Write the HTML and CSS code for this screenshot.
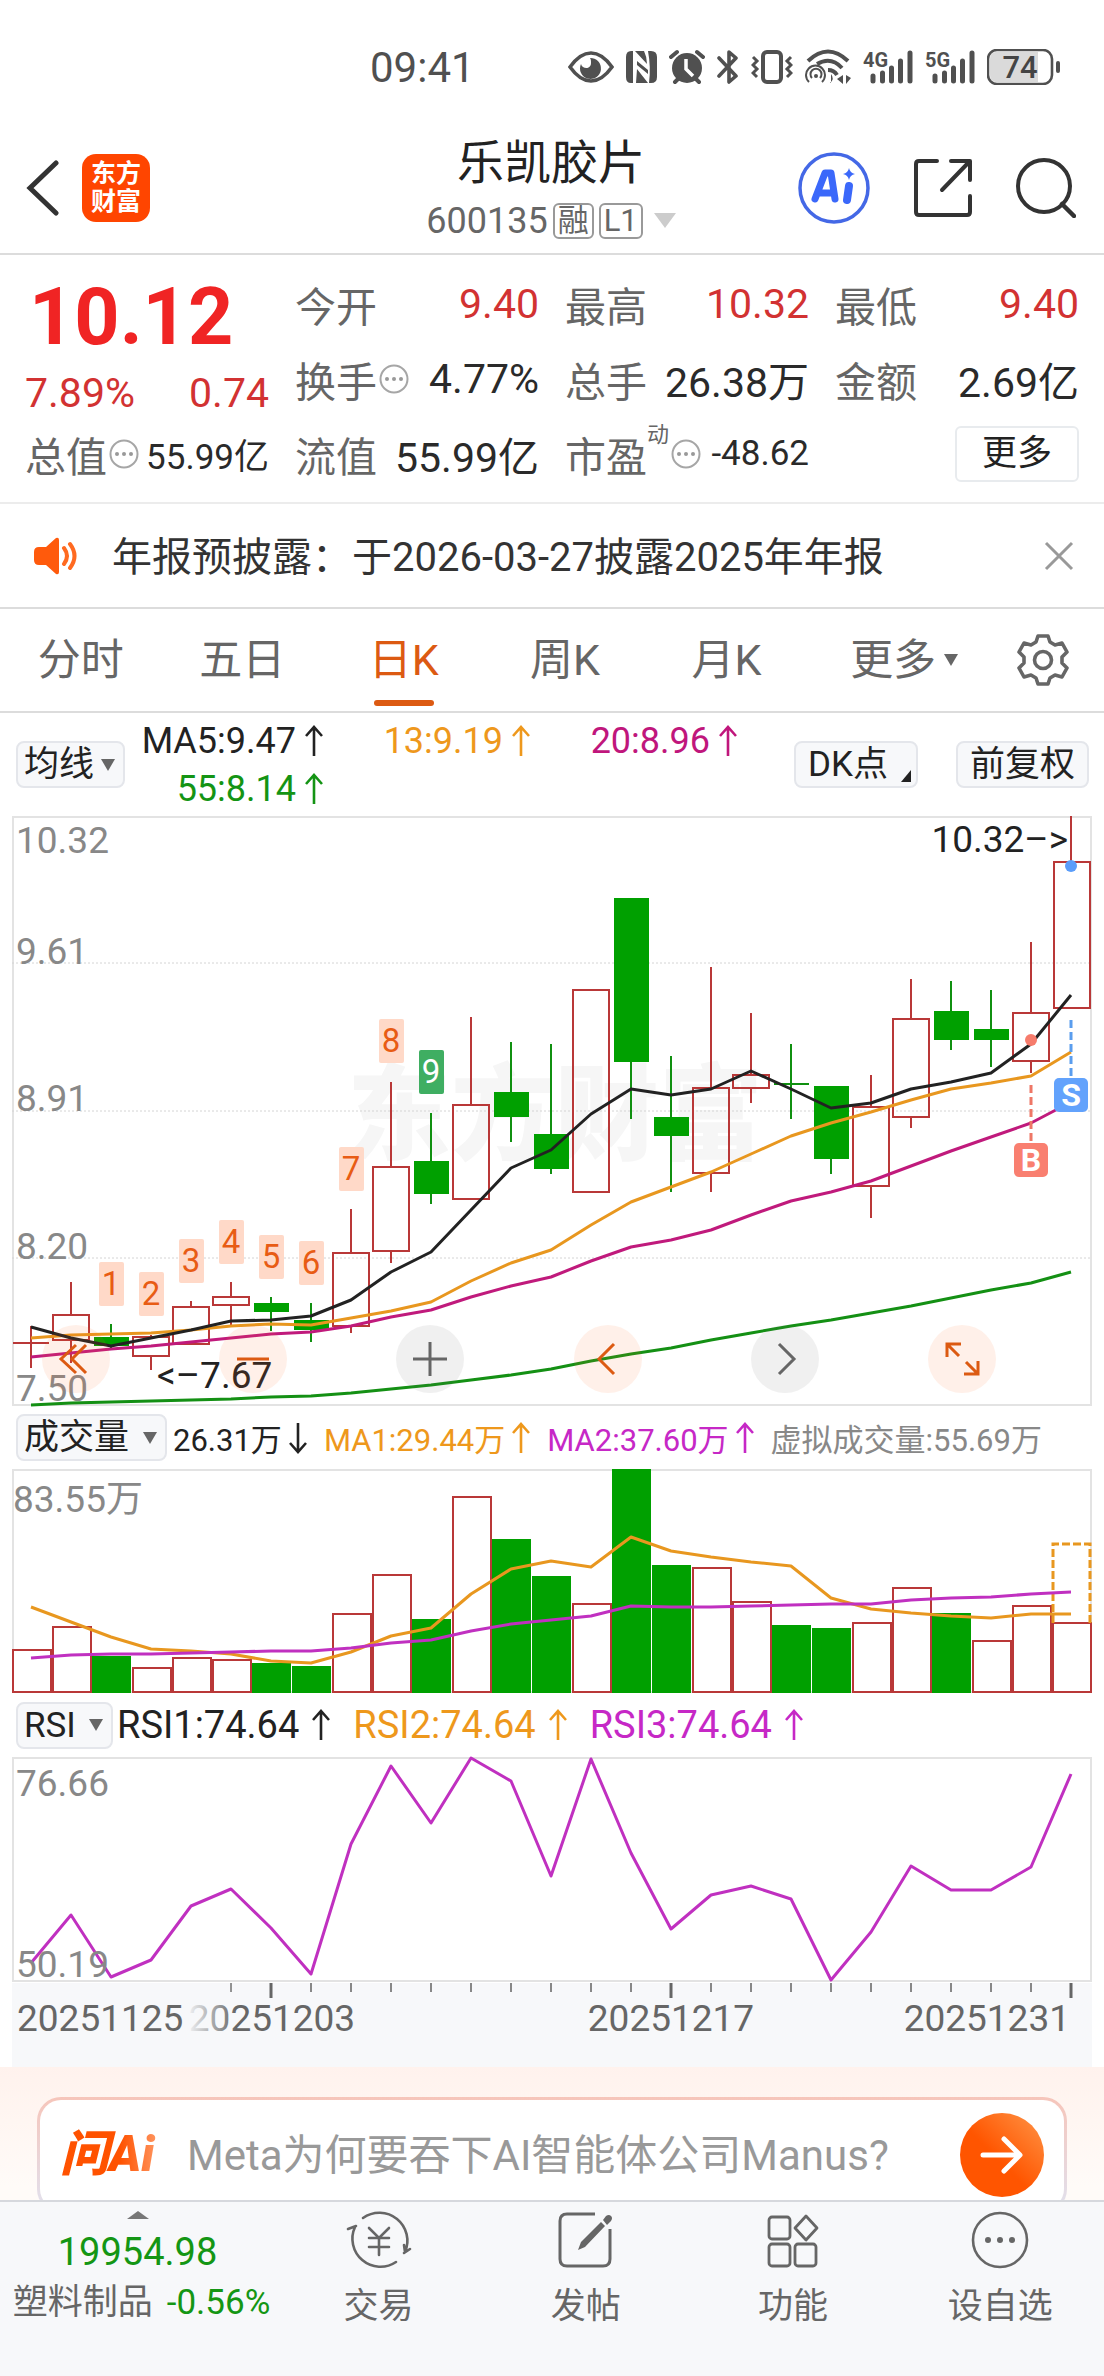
FILE: index.html
```html
<!DOCTYPE html>
<html lang="zh-CN">
<head>
    <meta charset="UTF-8">
    <meta name="viewport" content="width=device-width, initial-scale=1.0">
    <title>乐凯胶片 600135</title>
    <link rel="stylesheet" href="styles.css">
</head>
<body>
    <svg class="defs" width="0" height="0" aria-hidden="true">
        <symbol id="up" viewBox="0 0 20 32"><path d="M10 31V2M2 11l8-9 8 9" fill="none" stroke="currentColor" stroke-width="2.6"/></symbol>
        <symbol id="down" viewBox="0 0 20 32"><path d="M10 1v29M2 21l8 9 8-9" fill="none" stroke="currentColor" stroke-width="2.6"/></symbol>
        <symbol id="caret" viewBox="0 0 14 12"><path d="M0 0h14L7 12z" fill="currentColor"/></symbol>
        <symbol id="info" viewBox="0 0 30 30"><circle cx="15" cy="15" r="13.5" fill="none" stroke="#a6a6a6" stroke-width="2"/><g fill="#999"><circle cx="8" cy="15" r="2"/><circle cx="15" cy="15" r="2"/><circle cx="22" cy="15" r="2"/></g></symbol>
    </svg>

    <div class="status-bar">
        <span class="time">09:41</span>
        <div class="status-icons">
            <svg width="46" height="36" viewBox="0 0 46 36"><path d="M2 18Q12 4 23 4t21 14Q34 32 23 32T2 18z" fill="none" stroke="#505050" stroke-width="3.6"/><path d="M22 9a10.500 10.500 0 1 1-9 6c1 5 10 6 10-1 0-2 0-4-1-5z" fill="#505050"/></svg>
            <svg width="31" height="36" viewBox="0 0 31 36"><path d="M5 2h2v32H5q-5 0-5-6V8q0-6 5-6zM25 2q6 0 6 6v20q0 6-6 6h-2q2-16-1-32z" fill="#505050"/><path d="M9 2h9q3 6 3 13zM11 12l11 9v4L11 16zM11 20l11 14H10z" fill="#505050"/></svg>
            <svg width="36" height="36" viewBox="0 0 36 36"><circle cx="18" cy="19" r="15" fill="#505050"/><path d="M2 8l6-5M34 8l-6-5M6 33l5-5M30 33l-5-5" stroke="#505050" stroke-width="4" stroke-linecap="round"/><path d="M17 10v10l7 7" fill="none" stroke="#fff" stroke-width="3.500"/></svg>
            <svg width="22" height="36" viewBox="0 0 22 36"><path d="M2 9l17 18-7 6V3l7 6L2 27" fill="none" stroke="#505050" stroke-width="3.600" stroke-linejoin="round" stroke-linecap="round"/></svg>
            <svg width="42" height="36" viewBox="0 0 42 36"><rect x="12" y="3" width="18" height="30" rx="4" fill="none" stroke="#505050" stroke-width="4"/><path d="M2 8l4 4-4 4 4 4-4 4 4 4M40 8l-4 4 4 4-4 4 4 4-4 4" fill="none" stroke="#505050" stroke-width="3"/></svg>
            <svg width="46" height="36" viewBox="0 0 46 36"><g fill="none" stroke="#505050"><path d="M3 12Q23-7 43 12" stroke-width="4"/><path d="M12 15q14-8 25 4M23 21q6 0 9 5" stroke-width="4"/><path d="M4 33a9.500 9.500 0 1 1 13 0M7 29a5.500 5.500 0 1 1 8 0" stroke-width="2"/></g><circle cx="11" cy="27" r="2" fill="#505050"/><path d="M25 34q5-4 1-9v9M38 26v9l-6-5zM41 26v9l5-6z" fill="#505050"/></svg>
            <svg class="signal" width="50" height="36" viewBox="0 0 50 36"><text x="0" y="18" class="net">4G</text><path d="M10 27v5M19.500 24v8M28.500 19v13M37.500 12v20M47 4v28" stroke="#505050" stroke-width="5" stroke-linecap="round"/></svg>
            <svg class="signal" width="50" height="36" viewBox="0 0 50 36"><text x="0" y="18" class="net">5G</text><path d="M10 27v5M19.500 24v8M28.500 19v13M37.500 12v20M47 4v28" stroke="#505050" stroke-width="5" stroke-linecap="round"/></svg>
            <svg width="73" height="36" viewBox="0 0 73 36"><path d="M9 3h42v30H9q-6 0-6-7V10q0-7 6-7z" fill="#dadada"/><rect x="1" y="1" width="64" height="34" rx="9" fill="none" stroke="#505050" stroke-width="2.600"/><rect x="69" y="12" width="4" height="12" rx="2" fill="#505050"/><text x="33" y="29" text-anchor="middle" class="battery">74</text></svg>
        </div>
    </div>

    <header class="header">
        <div class="header-left">
            <button class="icon-btn" aria-label="返回"><svg width="34" height="56" viewBox="0 0 34 56"><path d="M30 3L4 28l26 25" fill="none" stroke="#333" stroke-width="5" stroke-linecap="round"/></svg></button>
            <a class="logo" href="#"><span>东方</span><span>财富</span></a>
        </div>
        <div class="header-title">
            <h1>乐凯胶片</h1>
            <div class="code">600135<span class="tag">融</span><span class="tag">L1</span><svg width="22" height="15" viewBox="0 0 14 12" preserveAspectRatio="none"><path d="M0 0h14L7 12z" fill="#ccc"/></svg></div>
        </div>
        <div class="header-right">
            <button class="icon-btn" aria-label="Ai"><svg width="72" height="72" viewBox="0 0 72 72"><circle cx="36" cy="36" r="34" fill="none" stroke="#4468e6" stroke-width="3.500"/><g fill="none" stroke="#3b68fa" stroke-linejoin="round" stroke-linecap="round"><path d="M17 47l10-26h6l4 26M21 41h14" stroke-width="7"/><path d="M51 34l-2 14" stroke-width="8"/></g><path d="M51 16q1 5 6 6-5 1-6 6-1-5-6-6 5-1 6-6z" fill="#3b68fa"/></svg></button>
            <button class="icon-btn" aria-label="分享"><svg width="58" height="58" viewBox="0 0 58 58"><path d="M23 2H5Q2 2 2 5v48q0 3 3 3h48q3 0 3-3V37M37 2h19v19M55 3L28 31" fill="none" stroke="#333" stroke-width="4" stroke-linecap="round" stroke-linejoin="round"/></svg></button>
            <button class="icon-btn" aria-label="搜索"><svg width="60" height="60" viewBox="0 0 60 60"><circle cx="28" cy="28" r="26" fill="none" stroke="#333" stroke-width="4"/><path d="M46 46l12 12" stroke="#333" stroke-width="4.500" stroke-linecap="round"/></svg></button>
        </div>
    </header>

    <section class="quote">
        <div class="price-box">
            <div class="price">10.12</div>
            <div class="change"><span>7.89%</span><span>0.74</span></div>
        </div>
        <div class="item"><span class="label">今开</span><span class="value red">9.40</span></div>
        <div class="item"><span class="label">最高</span><span class="value red">10.32</span></div>
        <div class="item"><span class="label">最低</span><span class="value red">9.40</span></div>
        <div class="item"><span class="label">换手<svg class="info"><use href="#info"/></svg></span><span class="value">4.77%</span></div>
        <div class="item"><span class="label">总手</span><span class="value">26.38万</span></div>
        <div class="item"><span class="label">金额</span><span class="value">2.69亿</span></div>
        <div class="item"><span class="label">总值<svg class="info"><use href="#info"/></svg></span><span class="value small">55.99亿</span></div>
        <div class="item"><span class="label">流值</span><span class="value">55.99亿</span></div>
        <div class="item"><span class="label">市盈<sup>动</sup><svg class="info"><use href="#info"/></svg></span><span class="value small">-48.62</span></div>
        <div class="item item-more"><button class="more-btn">更多</button></div>
    </section>

    <div class="notice">
        <svg width="46" height="38" viewBox="0 0 46 38"><path d="M5 10h7L22 1q3-1 3 2v32q0 3-3 2l-10-9H5q-5 0-5-5v-8q0-5 5-5z" fill="#ff5a0c"/><path d="M30 11q6 8 0 16M36 7q9 12 0 24" fill="none" stroke="#ff6a20" stroke-width="4" stroke-linecap="round"/></svg>
        <a href="#">年报预披露：于2026-03-27披露2025年年报</a>
        <button class="icon-btn" aria-label="关闭"><svg width="30" height="30" viewBox="0 0 30 30"><path d="M2 2l26 26M28 2L2 28" stroke="#999" stroke-width="3"/></svg></button>
    </div>

    <nav class="tabs">
        <a href="#">分时</a>
        <a href="#">五日</a>
        <a href="#" class="active">日K</a>
        <a href="#">周K</a>
        <a href="#">月K</a>
        <button class="tab-more">更多<svg width="14" height="12"><use href="#caret"/></svg></button>
        <button class="icon-btn" aria-label="设置"><svg width="52" height="52" viewBox="0 0 52 52"><g fill="none" stroke="#666" stroke-width="3.600" stroke-linejoin="round"><path d="M21 2h10l2 6 5 3 7-2 5 9-5 5v6l5 5-5 9-7-2-5 3-2 6H21l-2-6-5-3-7 2-5-9 5-5v-6l-5-5 5-9 7 2 5-3z"/><circle cx="26" cy="26" r="8.500"/></g></svg></button>
    </nav>

    <div class="ma-bar">
        <label class="picker picker-ma"><select aria-label="均线"><option>均线</option></select><svg width="14" height="12"><use href="#caret"/></svg></label>
        <div class="ma-values">
            <span>MA5:9.47<svg class="arrow"><use href="#up"/></svg></span>
            <span class="c-orange">13:9.19<svg class="arrow"><use href="#up"/></svg></span>
            <span class="c-purple">20:8.96<svg class="arrow"><use href="#up"/></svg></span>
            <span class="c-green">55:8.14<svg class="arrow"><use href="#up"/></svg></span>
        </div>
        <div class="ma-buttons">
            <button class="chip chip-dk">DK点<svg width="10" height="12" viewBox="0 0 10 12"><path d="M10 0v12H0z" fill="#222"/></svg></button>
            <button class="chip">前复权</button>
        </div>
    </div>

    <main class="charts">
        <div class="k-chart">
            <svg class="plot" viewBox="0 0 1080 590">
                <text class="watermark" x="335" y="336">东方财富</text>
                <rect class="frame" x="1" y="1" width="1078" height="588"/>
                <path class="grid" d="M0 147H1080M0 295H1080M0 442H1080"/>

                <g class="axis">
                    <text x="4" y="37">10.32</text>
                    <text x="4" y="148">9.61</text>
                    <text x="4" y="295">8.91</text>
                    <text x="4" y="443">8.20</text>
                    <text x="4" y="585">7.50</text>
                </g>

                <!-- rising candles -->
                <path class="rise" d="M19 510V552M1 527H37
                    M59 466V499M59 524V547M41 499h36v25h-36z
                    M139 519V521M139 540V554M121 521h36v19h-36z
                    M179 485V491M161 491h36v37h-36z
                    M219 466V481M219 489V509M201 481h36v8h-36z
                    M339 393V437M339 510V517M321 437h36v73h-36z
                    M379 266V351M379 435V447M361 351h36v84h-36z
                    M459 201V289M441 289h36v94h-36z
                    M561 174h36v202h-36z
                    M699 151V272M699 357V376M681 272h36v85h-36z
                    M739 197V259M739 272V287M721 259h36v13h-36z
                    M859 259V291M859 370V402M841 291h36v79h-36z
                    M899 163V203M899 301V312M881 203h36v98h-36z
                    M1019 126V197M1019 245V257M1001 197h36v48h-36z
                    M1059 0V46M1042 46h36v146h-36z"/>
                <!-- falling candles -->
                <path class="fall-line" d="M99 508V534M259 481V515M299 487V526M419 297V388M499 226V326M539 228V358M619 82V303M659 240V376M779 228V303M762 268H797M819 270V358M939 165V234M979 174V251"/>
                <path class="fall" d="M82 521h35v9h-35zM242 487h35v9h-35zM282 504h35v10h-35zM402 345h35v33h-35zM482 276h35v25h-35zM522 318h35v35h-35zM602 82h35v164h-35zM642 301h35v19h-35zM802 270h35v73h-35zM922 195h35v29h-35zM962 213h35v11h-35z"/>

                <g class="nine">
                    <rect x="87" y="446" width="25" height="44" rx="2"/><text x="99" y="479">1</text>
                    <rect x="127" y="456" width="25" height="44" rx="2"/><text x="139" y="489">2</text>
                    <rect x="167" y="423" width="25" height="44" rx="2"/><text x="179" y="456">3</text>
                    <rect x="207" y="404" width="25" height="44" rx="2"/><text x="219" y="437">4</text>
                    <rect x="247" y="419" width="25" height="44" rx="2"/><text x="259" y="452">5</text>
                    <rect x="287" y="425" width="25" height="44" rx="2"/><text x="299" y="458">6</text>
                    <rect x="327" y="331" width="25" height="44" rx="2"/><text x="339" y="364">7</text>
                    <rect x="367" y="203" width="25" height="44" rx="2"/><text x="379" y="236">8</text>
                    <rect class="nine-end" x="407" y="234" width="25" height="44" rx="2"/><text class="nine-end-text" x="419" y="267">9</text>
                </g>

                <polyline class="line s-green" points="19,589 59,587 99,586 139,585 179,584 219,583 259,581 299,580 339,577 379,573 419,569 459,564 499,559 539,553 579,545 619,538 659,532 699,524 739,517 779,510 819,504 859,497 899,490 939,482 979,474 1019,467 1059,456"/>
                <polyline class="line s-purple" points="19,541 59,537 99,533 139,530 179,526 219,522 259,518 299,516 339,510 379,501 419,494 459,481 499,470 539,461 579,445 619,431 659,424 699,414 739,399 779,385 819,376 859,365 899,350 939,335 979,321 1019,307 1059,286"/>
                <polyline class="line s-orange" points="19,522 59,519 99,518 139,517 179,514 219,510 259,508 299,509 339,502 379,495 419,486 459,465 499,447 539,434 579,409 619,386 659,371 699,356 739,338 779,320 819,307 859,296 899,284 939,273 979,267 1019,260 1059,236"/>
                <polyline class="line s-black" points="19,511 59,522 99,530 139,522 179,514 219,505 259,504 299,500 339,484 379,456 419,436 459,394 499,352 539,334 579,298 619,273 659,279 699,273 739,255 779,273 819,292 859,287 899,273 939,266 979,257 1019,228 1059,179"/>

                <circle cx="1019" cy="224" r="6" fill="#f67c6c"/>
                <path d="M1019 269V326" stroke="#ee7766" stroke-width="3" stroke-dasharray="8 4"/>
                <rect x="1002" y="327" width="34" height="34" rx="5" fill="#f97f70"/>
                <text class="mark" x="1019" y="355">B</text>
                <circle cx="1059" cy="50" r="6" fill="#5a9dfa"/>
                <path d="M1059 204V262" stroke="#5a9dee" stroke-width="3" stroke-dasharray="8 4"/>
                <rect x="1042" y="262" width="34" height="34" rx="5" fill="#62a2fc"/>
                <text class="mark" x="1059" y="290">S</text>
                <text class="extreme" x="145" y="572">&lt;–7.67</text>
                <text class="extreme" x="1056" y="36" text-anchor="end">10.32–&gt;</text>
            </svg>
            <div class="k-tools">
                <button class="round" aria-label="最早"><svg viewBox="0 0 68 68"><path d="M34 20L19 34l15 14M44 20L30 34l14 14"/></svg></button>
                <button class="round" aria-label="缩小"><svg viewBox="0 0 68 68"><path d="M18 34h32"/></svg></button>
                <button class="round gray" aria-label="放大"><svg viewBox="0 0 68 68"><path d="M17 34h34M34 17v34"/></svg></button>
                <button class="round" aria-label="左移"><svg viewBox="0 0 68 68"><path d="M40 19L25 34l15 15"/></svg></button>
                <button class="round gray" aria-label="右移"><svg viewBox="0 0 68 68"><path d="M28 19l15 15-15 15"/></svg></button>
                <button class="round" aria-label="全屏"><svg viewBox="0 0 68 68"><path d="M19 32V19h14M19 19l12 12M50 36v13H36M50 49L38 37"/></svg></button>
            </div>
        </div>

        <div class="sub-bar volume-bar">
            <label class="picker picker-vol"><select aria-label="成交量"><option>成交量</option></select><svg width="14" height="12"><use href="#caret"/></svg></label>
            <span>26.31万<svg class="arrow"><use href="#down"/></svg></span>
            <span class="c-orange">MA1:29.44万<svg class="arrow"><use href="#up"/></svg></span>
            <span class="c-magenta">MA2:37.60万<svg class="arrow"><use href="#up"/></svg></span>
            <span class="c-gray">虚拟成交量:55.69万</span>
        </div>
        <svg class="plot" viewBox="0 0 1080 224">
            <rect class="frame" x="1" y="1" width="1078" height="222"/>
            <text class="axis" x="1" y="43">83.55万</text>
            <path class="rise" d="M1 181h38v42H1zM41 158h38v65H41zM121 199h38v24h-38zM161 189h38v34h-38zM201 191h38v32h-38zM321 145h38v78h-38zM361 106h38v117h-38zM441 28h38v195h-38zM561 135h38v88h-38zM681 99h38v124h-38zM721 133h38v90h-38zM841 154h38v69h-38zM881 119h38v104h-38zM961 172h38v51h-38zM1001 137h38v86h-38zM1041 154h38v69h-38z"/>
            <path class="fall" d="M80 187h39v37H80zM240 194h39v30h-39zM280 197h39v27h-39zM400 150h39v74h-39zM480 70h39v154h-39zM520 107h39v117h-39zM600 0h39v224h-39zM640 96h39v128h-39zM760 156h39v68h-39zM800 159h39v65h-39zM920 144h39v80h-39z"/>
            <path class="virtual" d="M1041 154V75H1078V154"/>
            <polyline class="line s-orange" points="19,138 59,153 99,168 139,180 179,182 219,185 259,192 299,194 339,183 379,167 419,159 459,125 499,100 539,92 579,98 619,68 659,82 699,88 739,93 779,97 819,129 859,140 899,144 939,147 979,149 1019,145 1059,145"/>
            <polyline class="line s-magenta" points="19,189 59,186 99,185 139,185 179,184 219,183 259,182 299,182 339,179 379,174 419,171 459,162 499,155 539,151 579,147 619,137 659,138 699,138 739,137 779,136 819,135 859,135 899,131 939,129 979,128 1019,125 1059,123"/>
        </svg>

        <div class="sub-bar rsi-bar">
            <label class="picker picker-rsi"><select aria-label="RSI"><option>RSI</option></select><svg width="14" height="12"><use href="#caret"/></svg></label>
            <span>RSI1:74.64<svg class="arrow"><use href="#up"/></svg></span>
            <span class="c-orange">RSI2:74.64<svg class="arrow"><use href="#up"/></svg></span>
            <span class="c-magenta">RSI3:74.64<svg class="arrow"><use href="#up"/></svg></span>
        </div>
        <svg class="plot" viewBox="0 0 1080 226">
            <rect class="frame" x="1" y="1" width="1078" height="223"/>
            <text class="axis" x="4" y="39">76.66</text>
            <polyline class="line s-magenta" points="19,206 59,158 99,220 139,203 179,149 219,132 259,171 299,217 339,87 379,9 419,66 459,1 499,24 539,119 579,2 619,96 659,172 699,138 739,129 779,142 819,223 859,175 899,109 939,133 979,133 1019,110 1059,17"/>
            <text class="axis" x="4" y="220">50.19</text>
        </svg>
        <svg class="plot dates" viewBox="0 0 1080 84">
            <defs><linearGradient id="fade"><stop offset="0" stop-color="#f7f8fa"/><stop offset="1" stop-color="#f7f8fa" stop-opacity="0"/></linearGradient></defs>
            <path stroke="#888" stroke-width="2" d="M219 0v9M299 0v9M339 0v9M379 0v9M419 0v9M459 0v9M499 0v9M539 0v9M579 0v9M619 0v9M699 0v9M739 0v9M779 0v9M819 0v9M859 0v9M899 0v9M939 0v9M979 0v9M1019 0v9"/>
            <path stroke="#666" stroke-width="3" d="M259 0v15M659 0v15M1059 0v15"/>
            <text x="5" y="48">20251125</text>
            <text x="260" y="48" text-anchor="middle">20251203</text>
            <text x="659" y="48" text-anchor="middle">20251217</text>
            <text x="1058" y="48" text-anchor="end">20251231</text>
            <rect x="174" y="0" width="50" height="84" fill="url(#fade)"/>
        </svg>
    </main>

    <section class="ask">
        <form class="ask-box">
            <label class="ask-logo" for="ask">问Ai</label>
            <input id="ask" type="text" placeholder="Meta为何要吞下AI智能体公司Manus?">
            <button type="button" class="ask-btn" aria-label="提问"><svg width="44" height="40" viewBox="0 0 44 40"><path d="M3 20h36M24 4l16 16-16 16" fill="none" stroke="#fff" stroke-width="5" stroke-linecap="round" stroke-linejoin="round"/></svg></button>
        </form>
    </section>

    <nav class="bottom-nav">
        <a href="#" class="index-box">
            <svg width="22" height="8" viewBox="0 0 22 8"><path d="M0 8L11 0l11 8z" fill="#777"/></svg>
            <span class="index-value">19954.98</span>
            <span class="index-row"><span>塑料制品</span><span class="index-change">-0.56%</span></span>
        </a>
        <a href="#"><svg width="66" height="58" viewBox="0 0 66 58"><g fill="none" stroke="#666" stroke-width="2.600" stroke-linecap="round"><path d="M17 7a28 28 0 0 1 42 34M59 41l-1-7M58 42l6-4M50 51A28 28 0 0 1 9 16M10 15l-8 3"/><path d="M23 17l10 10 10-10M33 27v17M23 27h20M23 36h20"/></g></svg>交易</a>
        <a href="#"><svg width="58" height="58" viewBox="0 0 58 58"><path d="M38 3H10Q3 3 3 10v38q0 7 7 7h36q7 0 7-7V18" fill="none" stroke="#666" stroke-width="3"/><path d="M21 39l3-8 20-20 4 4-20 21zM46 9l3-4q3-2 5 0t0 5l-4 4z" fill="#666"/></svg>发帖</a>
        <a href="#"><svg width="58" height="58" viewBox="0 0 58 58"><g fill="none" stroke="#666" stroke-width="2.800"><rect x="5" y="6" width="21" height="22" rx="3"/><rect x="5" y="33" width="21" height="22" rx="3"/><rect x="31" y="33" width="21" height="22" rx="3"/><path d="M42 5l11 12-11 12-11-12z" stroke-linejoin="round"/></g></svg>功能</a>
        <a href="#"><svg width="58" height="58" viewBox="0 0 58 58"><circle cx="29" cy="29" r="27" fill="none" stroke="#666" stroke-width="2.600"/><g fill="#666"><circle cx="17" cy="29" r="3"/><circle cx="29" cy="29" r="3"/><circle cx="41" cy="29" r="3"/></g></svg>设自选</a>
    </nav>
</body>
</html>
```
FILE: styles.css
```css
* {
    box-sizing: border-box;
}

body {
    margin: 0;
    background-color: #fff;
    color: #222;
    font-family: Roboto, "Noto Sans CJK SC", sans-serif;
    font-size: 36px;
}

a {
    color: inherit;
    text-decoration: none;
}

button,
select,
input {
    font: inherit;
    color: inherit;
    margin: 0;
    padding: 0;
}

svg {
    display: block;
    flex: none;
}

.defs {
    position: absolute;
}

.icon-btn {
    border: none;
    background: none;
    cursor: pointer;
}

/* Status bar */
.status-bar {
    display: flex;
    align-items: center;
    justify-content: space-between;
    height: 116px;
    padding: 18px 44px 0 370px;
    color: #505050;
}

.time {
    font-size: 42px;
}

.status-icons {
    display: flex;
    align-items: center;
    gap: 12px;
}

.signal {
    overflow: visible;
}

.net {
    font-size: 20px;
    font-weight: 700;
    fill: #505050;
}

.battery {
    font-size: 31px;
    font-weight: 500;
    fill: #444;
}

/* Header */
.header {
    display: grid;
    grid-template-columns: 1fr auto 1fr;
    align-items: center;
    height: 139px;
    padding: 6px 28px 0 26px;
    border-bottom: 2px solid #dcdcdc;
}

.header-left {
    display: flex;
    align-items: center;
    gap: 22px;
}

.header-right {
    display: flex;
    align-items: center;
    justify-content: flex-end;
    gap: 44px;
}

.logo {
    display: flex;
    flex-direction: column;
    align-items: center;
    justify-content: center;
    width: 68px;
    height: 68px;
    border-radius: 14px;
    background-color: #ff4500;
    color: #fff;
    font-size: 25px;
    font-weight: 700;
    line-height: 28px;
}

.header-title {
    text-align: center;
}

.header-title h1 {
    margin: 0;
    font-size: 47px;
    font-weight: 400;
    line-height: 66px;
}

.code {
    display: flex;
    align-items: center;
    justify-content: center;
    gap: 5px;
    line-height: 50px;
    color: #666;
}

.tag {
    height: 36px;
    padding: 0 3px;
    border: 2px solid #999;
    border-radius: 6px;
    font-size: 31px;
    line-height: 32px;
}

.code svg {
    margin-left: 6px;
}

/* Quote */
.quote {
    display: grid;
    grid-template-columns: repeat(4, 1fr);
    grid-auto-rows: 75px;
    column-gap: 26px;
    padding: 11px 25px;
    border-bottom: 2px solid #ececec;
    font-size: 41px;
}

.price-box {
    grid-row: span 2;
}

.price {
    padding-left: 4px;
    font-size: 79px;
    font-weight: 700;
    line-height: 102px;
    color: #f02424;
}

.change {
    display: flex;
    justify-content: space-between;
    line-height: 50px;
    color: #d23232;
}

.item {
    display: flex;
    align-items: center;
    justify-content: space-between;
    white-space: nowrap;
}

.label {
    display: flex;
    align-items: center;
    color: #666;
}

.label sup {
    align-self: flex-start;
    font-size: 22px;
    line-height: 22px;
}

.info {
    width: 30px;
    height: 30px;
    margin-left: 2px;
}

.value {
    color: #2a2a2a;
}

.red {
    color: #d23232;
}

.small {
    font-size: 35px;
}

.item-more {
    justify-content: flex-end;
}

.more-btn {
    width: 124px;
    height: 56px;
    border: 2px solid #e8ebee;
    border-radius: 6px;
    background-color: #fff;
    font-size: 35px;
    line-height: 50px;
}

/* Notice */
.notice {
    display: flex;
    align-items: center;
    height: 105px;
    padding: 0 30px 0 34px;
    border-bottom: 2px solid #dcdcdc;
    color: #333;
    font-size: 40px;
}

.notice a {
    flex: 1;
    margin-left: 32px;
    padding-bottom: 4px;
}

/* Period tabs */
.tabs {
    display: flex;
    align-items: center;
    height: 104px;
    padding-right: 35px;
    border-bottom: 2px solid #dcdcdc;
    color: #666;
    font-size: 43px;
}

.tabs a,
.tab-more {
    flex: 5;
    position: relative;
    line-height: 100px;
    text-align: center;
}

.tab-more {
    display: flex;
    flex: 6;
    align-items: center;
    justify-content: center;
    gap: 8px;
    padding-right: 16px;
    border: none;
    background: none;
}

.tabs .active {
    color: #dc5a12;
}

.active::after {
    content: "";
    position: absolute;
    left: 50%;
    bottom: 4px;
    width: 60px;
    height: 6px;
    margin-left: -30px;
    border-radius: 3px;
    background-color: #dc5a12;
}

/* Moving averages */
.ma-bar {
    display: flex;
    align-items: center;
    height: 103px;
    padding: 0 15px 0 16px;
}

.ma-values {
    display: grid;
    grid-template-columns: repeat(3, 207px);
    flex: none;
    margin-left: -8px;
    line-height: 48px;
}

.ma-values span {
    display: flex;
    align-items: center;
    justify-content: flex-end;
    gap: 8px;
}

.arrow {
    width: 20px;
    height: 32px;
}

.ma-buttons {
    display: flex;
    flex: 1;
    justify-content: flex-end;
    gap: 38px;
}

.chip,
.picker {
    display: flex;
    align-items: center;
    position: relative;
    height: 47px;
    border: 2px solid #e4e6eb;
    border-radius: 8px;
    background-color: #f7f8fa;
    font-size: 35px;
    line-height: 43px;
}

.chip {
    padding: 0 12px;
}

.chip-dk {
    padding-right: 28px;
}

.chip-dk svg {
    position: absolute;
    right: 5px;
    bottom: 4px;
}

.picker select {
    appearance: none;
    width: 100%;
    height: 43px;
    border: none;
    background: none;
    padding-left: 6px;
    outline: none;
}

.picker svg {
    position: absolute;
    right: 8px;
    color: #666;
    pointer-events: none;
}

.picker-ma {
    width: 109px;
}

.picker-vol {
    width: 151px;
}

.picker-rsi {
    width: 97px;
}

.c-orange {
    color: #ee981c;
}

.c-purple {
    color: #c0167c;
}

.c-green {
    color: #149414;
}

.c-magenta {
    color: #c628c6;
}

.c-gray {
    color: #888;
}

/* Charts */
.charts {
    padding: 0 12px;
}

.k-chart {
    position: relative;
}

.plot {
    width: 100%;
    height: auto;
    overflow: visible;
}

.frame {
    fill: none;
    stroke: #e3e3e3;
    stroke-width: 2;
}

.grid {
    stroke: #d4d4d4;
    stroke-width: 1;
    stroke-dasharray: 2 2;
}

.axis {
    fill: #888;
    font-size: 37px;
}

.watermark {
    fill: #f6f6f6;
    font-size: 104px;
    font-weight: 900;
}

.rise {
    fill: none;
    stroke: #b93838;
    stroke-width: 2;
}

.fall {
    fill: #00a000;
}

.fall-line {
    stroke: #109010;
    stroke-width: 2;
}

.line {
    fill: none;
    stroke-width: 3;
    stroke-linejoin: round;
}

.s-black {
    stroke: #222;
}

.s-orange {
    stroke: #e8971f;
}

.s-purple {
    stroke: #c01a7c;
}

.s-green {
    stroke: #149014;
}

.s-magenta {
    stroke: #c030c0;
}

.virtual {
    fill: none;
    stroke: #e8971f;
    stroke-width: 3;
    stroke-dasharray: 8 3;
}

.nine {
    fill: #ffd9c8;
    font-size: 33px;
    text-anchor: middle;
}

.nine text {
    fill: #e85c14;
}

.nine .nine-end {
    fill: #3fae62;
}

.nine .nine-end-text {
    fill: #fff;
}

.mark {
    fill: #fff;
    font-size: 32px;
    font-weight: 700;
    text-anchor: middle;
}

.extreme {
    fill: #222;
    font-size: 37px;
}

.k-tools {
    display: flex;
    justify-content: space-between;
    position: absolute;
    left: 30px;
    right: 96px;
    bottom: 13px;
}

.round {
    width: 68px;
    height: 68px;
    border: none;
    border-radius: 50%;
    background-color: rgba(255, 110, 40, 0.1);
    color: #dc5a12;
}

.round path {
    fill: none;
    stroke: currentColor;
    stroke-width: 3;
}

.gray {
    background-color: rgba(110, 110, 110, 0.1);
    color: #666;
}

.sub-bar {
    display: flex;
    align-items: center;
    padding-left: 4px;
    white-space: nowrap;
}

.sub-bar span {
    display: flex;
    align-items: center;
}

.volume-bar {
    height: 63px;
    gap: 16px;
    font-size: 31px;
}

.volume-bar .picker {
    margin-right: -10px;
}

.volume-bar span {
    gap: 6px;
}

.rsi-bar {
    height: 64px;
    gap: 22px;
    font-size: 38px;
}

.rsi-bar .picker {
    margin-right: -18px;
}

.rsi-bar span {
    gap: 12px;
}

.dates {
    background-color: #f7f8fa;
    fill: #666;
    font-size: 37px;
}

/* Ask box */
.ask {
    padding: 30px 37px 0;
    background: linear-gradient(#fff2ed, #fffbf8 120px);
}

.ask-box {
    display: flex;
    align-items: center;
    height: 116px;
    padding: 0 20px;
    border: 3px solid transparent;
    border-radius: 24px;
    background: linear-gradient(#fff, #fff) padding-box, linear-gradient(#f6c5ba, #e0e2f0) border-box;
}

.ask-logo {
    width: 127px;
    background: linear-gradient(90deg, #ff5200 60px, #ff9a66 100px);
    background-clip: text;
    -webkit-background-clip: text;
    color: transparent;
    font-size: 49px;
    font-weight: 900;
    font-style: italic;
    line-height: 60px;
}

.ask-box input {
    flex: 1;
    min-width: 0;
    border: none;
    background: none;
    outline: none;
    font-size: 42px;
}

.ask-box input::placeholder {
    color: #999;
    opacity: 1;
}

.ask-btn {
    display: flex;
    align-items: center;
    justify-content: center;
    width: 84px;
    height: 84px;
    border: none;
    border-radius: 50%;
    background: linear-gradient(45deg, #ff5500 45%, #ff9648);
}

/* Bottom navigation */
.bottom-nav {
    display: grid;
    grid-template-columns: 275px repeat(4, 1fr);
    position: fixed;
    left: 0;
    right: 0;
    bottom: 0;
    height: 176px;
    border-top: 2px solid #d6d8dd;
    background-color: #f7f8fa;
    color: #666;
    font-size: 35px;
}

.bottom-nav a {
    display: flex;
    flex-direction: column;
    align-items: center;
    padding-top: 9px;
    line-height: 76px;
}

.index-value {
    font-size: 38px;
    line-height: 66px;
    color: #149614;
}

.index-row {
    display: flex;
    gap: 14px;
    padding-left: 8px;
    line-height: 36px;
    white-space: nowrap;
}

.index-change {
    color: #149614;
}
```
